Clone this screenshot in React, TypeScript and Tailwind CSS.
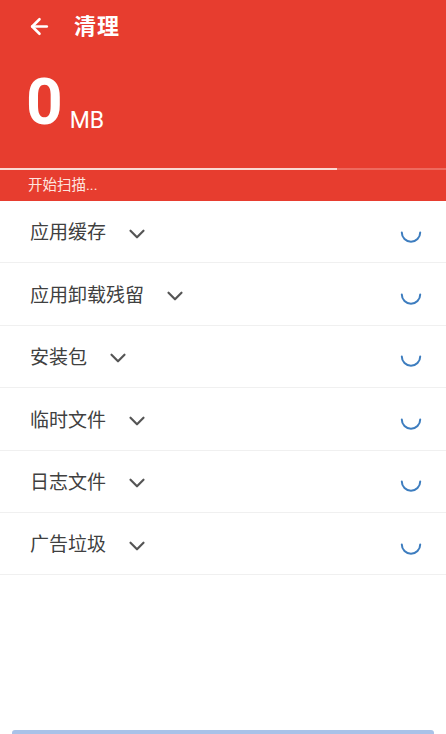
import { ArrowLeft, ChevronDown } from "lucide-react";

const items = ["应用缓存", "应用卸载残留", "安装包", "临时文件", "日志文件", "广告垃圾"];

function Spinner() {
  return (
    <svg width="24" height="24" viewBox="0 0 24 24" fill="none">
      <path
        d="M2.8 10.5 A9.2 9.2 0 0 0 21.2 10.5"
        stroke="#3d7dbf"
        strokeWidth="2"
        strokeLinecap="round"
      />
    </svg>
  );
}

export default function App() {
  return (
    <div className="flex h-[734px] w-full flex-col overflow-hidden bg-white font-['Roboto','Noto_Sans_CJK_SC',sans-serif]">
      <div className="flex h-[201px] flex-col bg-[#e73d2f] text-white">
        <div className="flex h-[52px] items-center pl-[27px]">
          <ArrowLeft size={25} strokeWidth={2.5} />
          <span className="ml-[22px] text-[22px] font-bold tracking-[1px]">清理</span>
        </div>
        <div className="flex h-[83px] items-end pl-[26px]">
          <span className="text-[64px] font-bold leading-none">0</span>
          <span className="mb-[3px] ml-[7px] text-[23px] leading-none">MB</span>
        </div>
        <div className="mt-[33px] flex h-[2px]">
          <div className="h-full w-[337px] bg-[#fbd9d3]" />
          <div className="h-full flex-1 bg-[#ee6a5e]" />
        </div>
        <div className="flex flex-1 items-center pl-[28px] text-[14.5px] text-[#fde4df]">开始扫描...</div>
      </div>
      <div className="flex flex-col">
        {items.map((name) => (
          <div
            key={name}
            className="flex h-[62.4px] items-center border-b border-[#f0f0f0] pl-[30px] pr-[23px] pt-[4px]"
          >
            <span className="text-[19px] text-[#404040]">{name}</span>
            <ChevronDown size={26} strokeWidth={2} className="ml-[18px] text-[#555]" />
            <div className="ml-auto">
              <Spinner />
            </div>
          </div>
        ))}
      </div>
      <div className="flex-1" />
      <div className="mx-[12px] h-[4px] rounded-t-[3px] bg-[#a9c2e8]" />
    </div>
  );
}
